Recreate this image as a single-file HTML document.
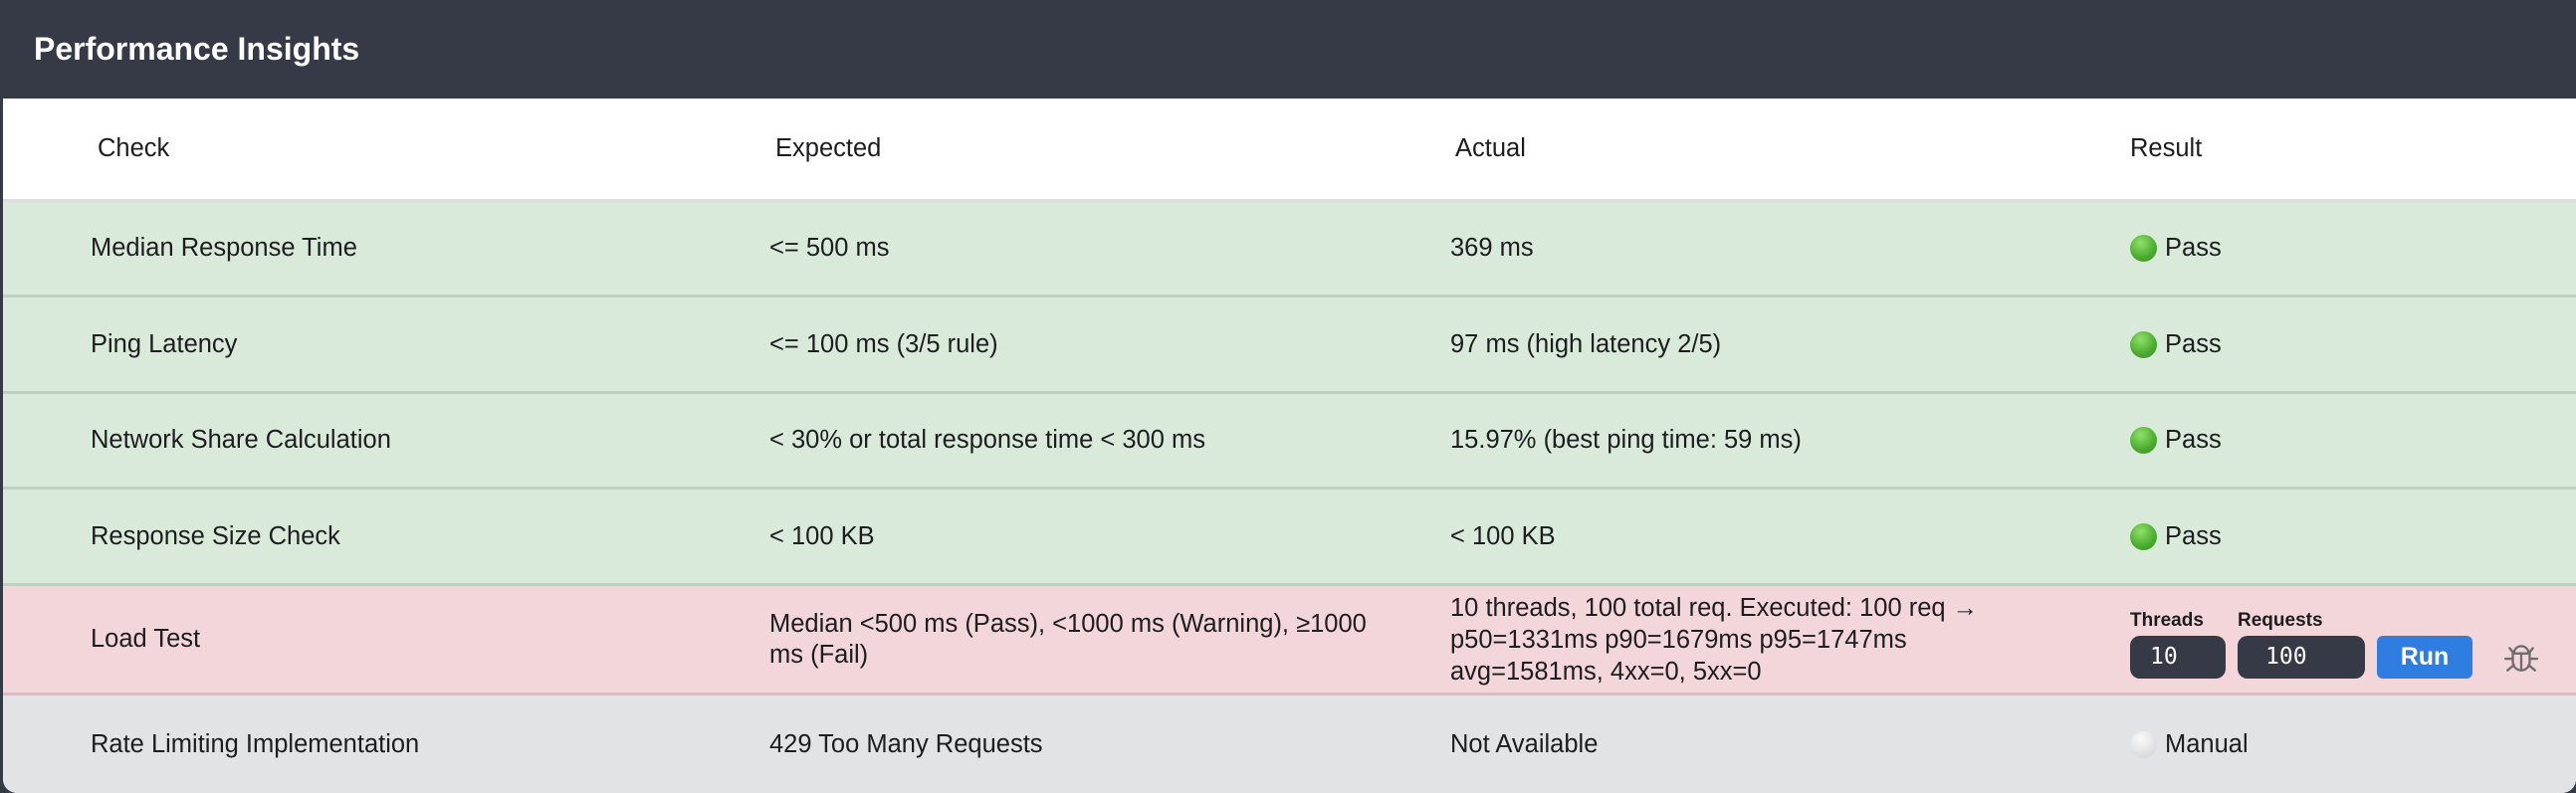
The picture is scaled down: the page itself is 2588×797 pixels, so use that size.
<!DOCTYPE html>
<html><head><meta charset="utf-8"><style>
*{margin:0;padding:0;box-sizing:border-box}
body{width:2588px;height:797px;background:#363a46;font-family:"Liberation Sans",Arial,sans-serif;color:#1d1d1f;position:relative;overflow:hidden}
.title{position:absolute;left:34px;top:0;height:99px;line-height:99px;color:#fff;font-weight:bold;font-size:32px}
.card{position:absolute;left:3px;top:99px;width:2585px;height:698px;background:#fff;border-radius:0 0 14px 14px;overflow:hidden}
.row{position:absolute;left:0;width:100%}
.c{position:absolute;top:0;height:100%;display:flex;align-items:center;font-size:25.5px;white-space:nowrap}
.dot{display:inline-block;width:27px;height:27px;border-radius:50%;margin-right:8px;background:radial-gradient(circle at 40% 30%,#8fe06a,#4aaa2e 60%,#3a8f24)}
.mdot{background:radial-gradient(circle at 40% 30%,#fafafa,#dcdcdc 70%,#cfcfcf)}
.lbl{position:absolute;font-weight:bold;font-size:19px;top:24px}
.inp{position:absolute;top:50px;height:43px;background:#363a46;border-radius:10px;color:#fff;font-family:"DejaVu Sans Mono","Liberation Mono",monospace;font-size:23px;line-height:43px}
.run{position:absolute;top:50px;left:2385px;width:96px;height:43px;background:#2f7de1;border-radius:6px;color:#fff;font-weight:bold;font-size:25px;text-align:center;line-height:43px}
</style></head><body>
<div class="title">Performance Insights</div>
<div class="card">
 <div class="row" style="top:0;height:104px;background:#fff;border-bottom:3px solid #dedede">
  <div class="c" style="left:95px">Check</div><div class="c" style="left:776px">Expected</div><div class="c" style="left:1459px">Actual</div><div class="c" style="left:2137px">Result</div>
 </div>
 <div class="row" style="top:104px;height:96px;background:#d9eadb;border-bottom:3px solid #bfcfc1">
  <div class="c" style="left:88px">Median Response Time</div><div class="c" style="left:770px">&lt;= 500 ms</div><div class="c" style="left:1454px">369 ms</div><div class="c" style="left:2137px"><span class="dot"></span>Pass</div>
 </div>
 <div class="row" style="top:200px;height:97px;background:#d9eadb;border-bottom:3px solid #bfcfc1">
  <div class="c" style="left:88px">Ping Latency</div><div class="c" style="left:770px">&lt;= 100 ms (3/5 rule)</div><div class="c" style="left:1454px">97 ms (high latency 2/5)</div><div class="c" style="left:2137px"><span class="dot"></span>Pass</div>
 </div>
 <div class="row" style="top:297px;height:96px;background:#d9eadb;border-bottom:3px solid #bfcfc1">
  <div class="c" style="left:88px">Network Share Calculation</div><div class="c" style="left:770px">&lt; 30% or total response time &lt; 300 ms</div><div class="c" style="left:1454px">15.97% (best ping time: 59 ms)</div><div class="c" style="left:2137px"><span class="dot"></span>Pass</div>
 </div>
 <div class="row" style="top:393px;height:97px;background:#d9eadb;border-bottom:3px solid #bfcfc1">
  <div class="c" style="left:88px">Response Size Check</div><div class="c" style="left:770px">&lt; 100 KB</div><div class="c" style="left:1454px">&lt; 100 KB</div><div class="c" style="left:2137px"><span class="dot"></span>Pass</div>
 </div>
 <div class="row" style="top:490px;height:110px;background:#f2d6da;border-bottom:3px solid #d8bcc0">
  <div class="c" style="left:88px">Load Test</div>
  <div class="c" style="left:770px;line-height:31px">Median &lt;500 ms (Pass), &lt;1000 ms (Warning), ≥1000<br>ms (Fail)</div>
  <div class="c" style="left:1454px;line-height:32px">10 threads, 100 total req. Executed: 100 req →<br>p50=1331ms p90=1679ms p95=1747ms<br>avg=1581ms, 4xx=0, 5xx=0</div>
  <div class="lbl" style="left:2137px">Threads</div><div class="lbl" style="left:2245px">Requests</div>
  <div class="inp" style="left:2137px;width:96px;padding-left:20px">10</div>
  <div class="inp" style="left:2245px;width:128px;padding-left:28px">100</div>
  <div class="run">Run</div>
  <svg style="position:absolute;left:2512px;top:54px" width="36" height="36" viewBox="0 0 34 34" fill="none" stroke="#6e6e6e" stroke-width="2.2" stroke-linecap="round">
   <path d="M10 13 A7 7 0 0 1 24 13 Z"/><path d="M9 13 H25 V21 A8 8 0 0 1 9 21 Z"/><path d="M17 13 V28"/><path d="M2 18 H9 M25 18 H32 M4 29 L10 24 M30 29 L24 24 M6 8 L10 13 M28 8 L24 13"/>
  </svg>
 </div>
 <div class="row" style="top:600px;height:98px;background:#e2e3e6">
  <div class="c" style="left:88px">Rate Limiting Implementation</div><div class="c" style="left:770px">429 Too Many Requests</div><div class="c" style="left:1454px">Not Available</div><div class="c" style="left:2137px"><span class="dot mdot"></span>Manual</div>
 </div>
</div>
</body></html>
